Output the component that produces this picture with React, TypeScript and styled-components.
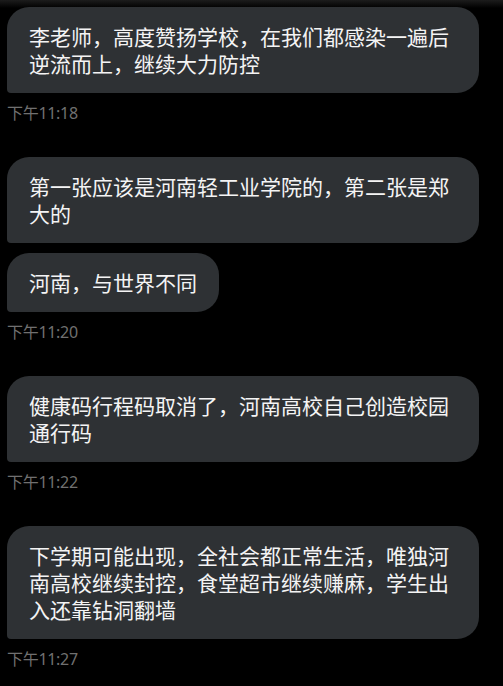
import React from 'react';
import styled, { createGlobalStyle } from 'styled-components';

const GlobalStyle = createGlobalStyle`
  html, body {
    margin: 0;
    padding: 0;
    background: #000;
  }
  body {
    font-family: "Noto Sans", "Noto Sans CJK SC", sans-serif;
  }
`;

type Message = {
  text: string;
};

type Group = {
  messages: Message[];
  time: string;
};

const groups: Group[] = [
  {
    messages: [{ text: '李老师，高度赞扬学校，在我们都感染一遍后逆流而上，继续大力防控' }],
    time: '下午11:18',
  },
  {
    messages: [
      { text: '第一张应该是河南轻工业学院的，第二张是郑大的' },
      { text: '河南，与世界不同' },
    ],
    time: '下午11:20',
  },
  {
    messages: [{ text: '健康码行程码取消了，河南高校自己创造校园通行码' }],
    time: '下午11:22',
  },
  {
    messages: [
      {
        text: '下学期可能出现，全社会都正常生活，唯独河南高校继续封控，食堂超市继续赚麻，学生出入还靠钻洞翻墙',
      },
    ],
    time: '下午11:27',
  },
];

/**
 * Chat thread.
 */
export default function App() {
  return (
    <>
      <GlobalStyle />
      <Thread>
        <TopShade />
        {groups.map((group, i) => (
          <MessageGroup key={i}>
            <Bubbles>
              {group.messages.map((msg, j) => (
                <Bubble key={j}>{msg.text}</Bubble>
              ))}
            </Bubbles>
            <Timestamp>{group.time}</Timestamp>
          </MessageGroup>
        ))}
      </Thread>
    </>
  );
}

const Thread = styled.div`
  position: relative;
  width: 503px;
  height: 686px;
  overflow: hidden;
  background: #000;
  padding: 7px 0 0 7px;
  box-sizing: border-box;
  display: flex;
  flex-direction: column;
  gap: 33px;
`;

const TopShade = styled.div`
  position: absolute;
  left: 0;
  right: 0;
  top: 0;
  height: 8px;
  background: linear-gradient(to bottom, #1c1c1c, rgba(0, 0, 0, 0));
  pointer-events: none;
`;

const MessageGroup = styled.div`
  display: flex;
  flex-direction: column;
  align-items: flex-start;
`;

const Bubbles = styled.div`
  display: flex;
  flex-direction: column;
  align-items: flex-start;
  gap: 10px;
`;

const Bubble = styled.div`
  position: relative;
  max-width: 472px;
  box-sizing: border-box;
  padding: 16px 22px;
  background: #2e3134;
  color: #f4f4f4;
  border-radius: 22px 22px 22px 4px;
  font-family: "Noto Sans CJK SC", sans-serif;
  font-size: 21px;
  line-height: 27px;
  letter-spacing: 0;
`;

const Timestamp = styled.div`
  margin-top: 9px;
  font-family: "Noto Sans", "Noto Sans CJK SC", sans-serif;
  font-size: 16px;
  line-height: 22px;
  letter-spacing: -0.3px;
  color: #707070;
`;
